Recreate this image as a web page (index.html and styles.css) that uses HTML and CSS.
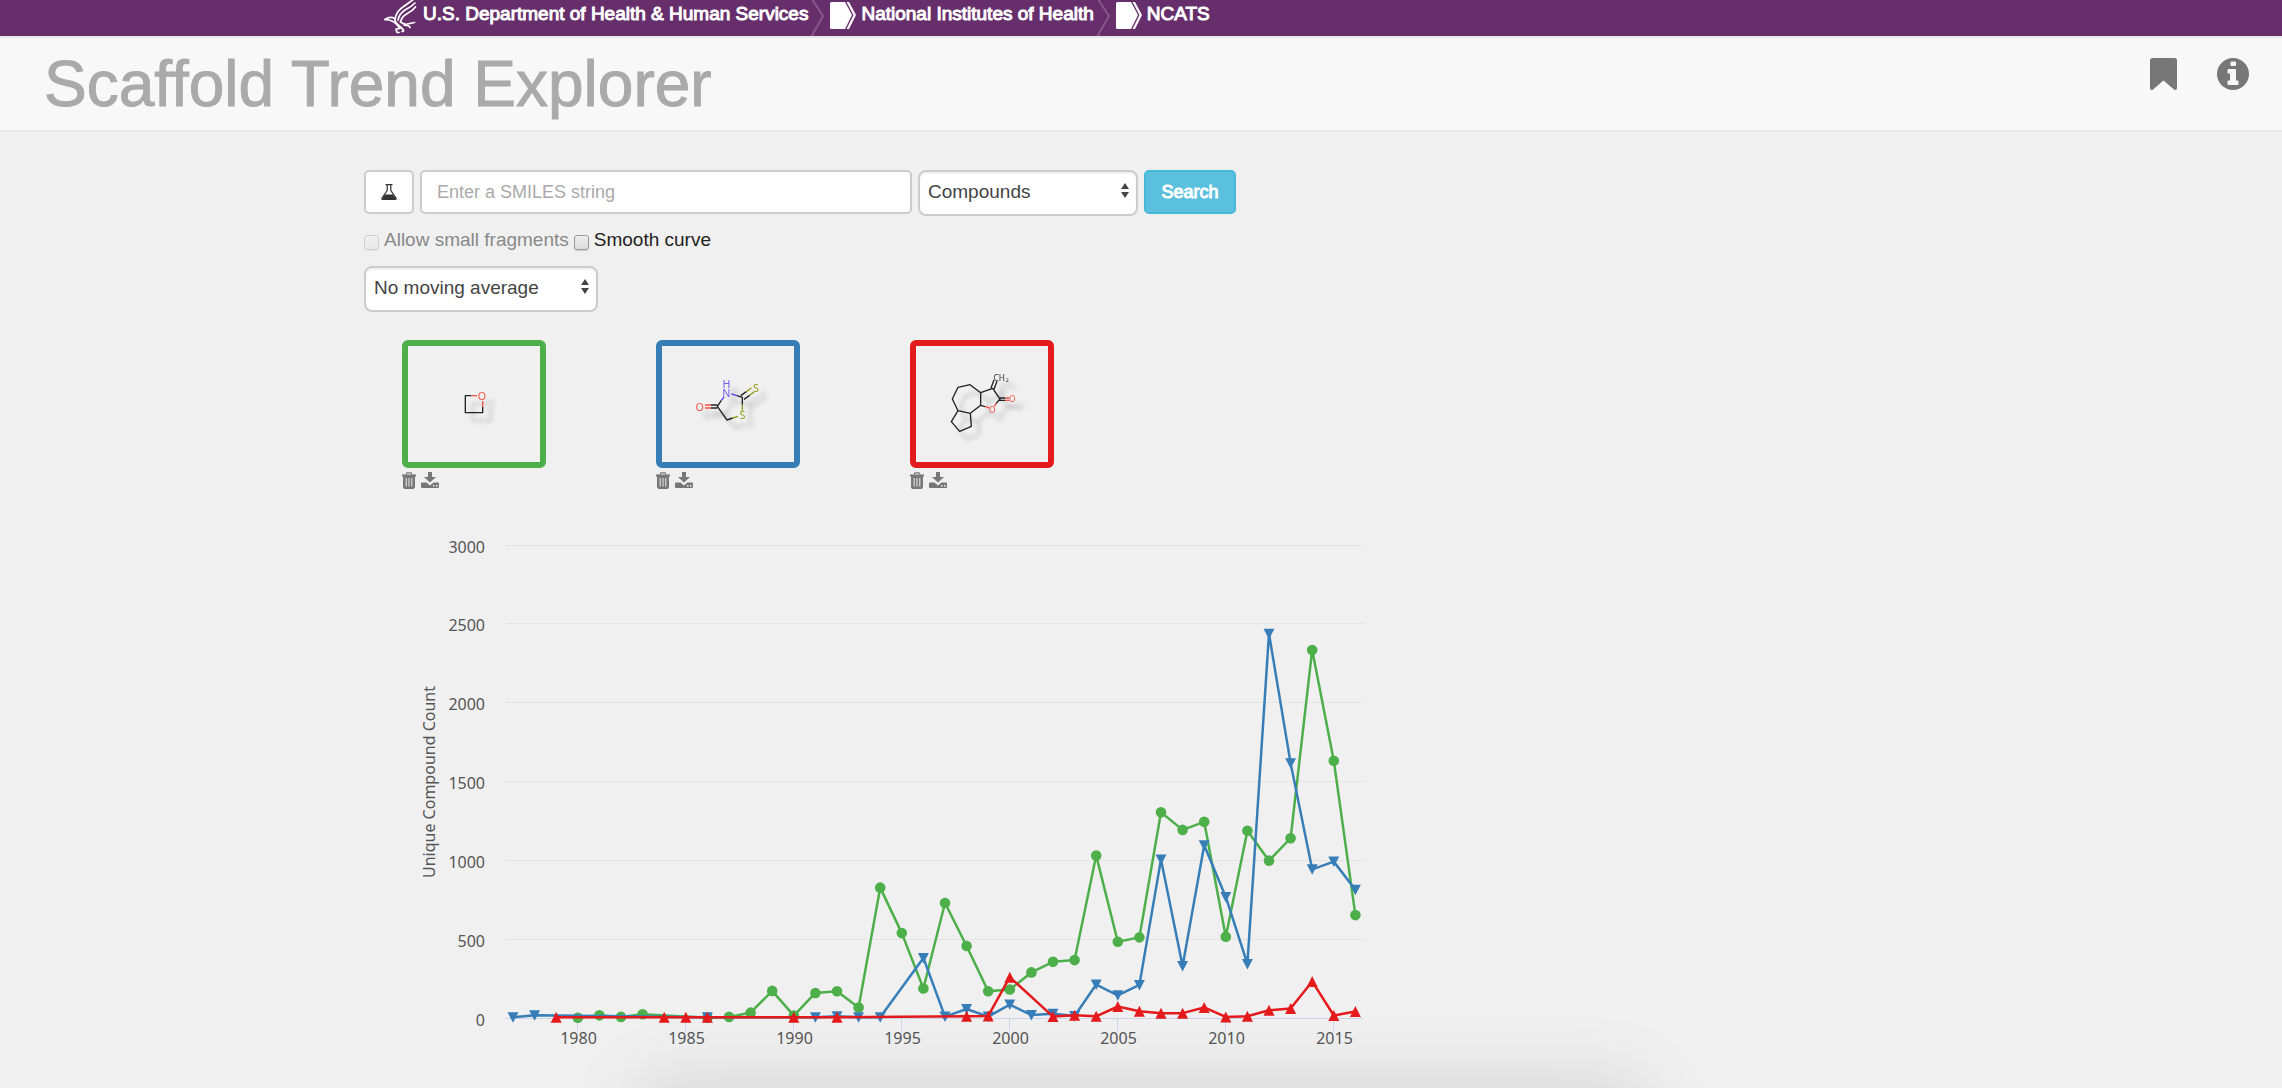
FILE: index.html
```html
<!DOCTYPE html>
<html lang="en">
<head>
<meta charset="utf-8">
<title>Scaffold Trend Explorer</title>
<link rel="stylesheet" href="styles.css">
</head>
<body>
<svg class="defs" aria-hidden="true">
  <symbol id="trash" viewBox="0 0 14 17">
    <path d="M4 2.500 5 .8h4l1 1.700" fill="none" stroke="currentColor" stroke-width="1.300"/>
    <path d="M0 2.500h14v2H0zM1 4.500h12V15q0 2-2 2H3q-2 0-2-2z" fill="currentColor"/>
    <path d="M4.200 6v8.500M7 6v8.500M9.800 6v8.500" stroke="#f0f0f0" stroke-width="1"/>
  </symbol>
  <symbol id="download" viewBox="0 0 18 17">
    <path d="M7 0h4v5h4L9 10.500 3 5h4z" fill="currentColor"/>
    <path d="M1 10.500h4.500L9 13.500l3.500-3H17q1 0 1 1V15q0 1-1 1H1q-1 0-1-1v-3.500q0-1 1-1z" fill="currentColor"/>
    <path d="M12 13h1.500v1.500H12zM15 13h1.500v1.500H15z" fill="#f0f0f0"/>
  </symbol>
  <symbol id="sorter" viewBox="0 0 8 17">
    <path d="M0 7 4 1l4 6zM0 10h8l-4 6z" fill="#444"/>
  </symbol>
  <symbol id="divider" viewBox="0 0 16 36">
    <path d="M2-1 13 16 1 37" fill="none" stroke="#85588a" stroke-width="2"/>
  </symbol>
  <symbol id="tag" viewBox="0 0 26 27">
    <path d="M1.500 0H15l7 13-7 14H1.500Q0 27 0 25.500v-24Q0 0 1.500 0z" fill="#fff"/>
    <path d="M16.500 0H19l7 13-7 14h-2.500l7-14z" fill="#fff"/>
  </symbol>
</svg>

<nav class="agency" aria-label="Agencies">
  <a class="agency-link" href="#hhs">
    <svg class="eagle" viewBox="0 0 34 34" aria-hidden="true">
      <g fill="none" stroke="#fff" stroke-width="1.700" stroke-linecap="round" stroke-linejoin="round">
        <path d="M1 19.500q5-3.500 10-1 2-8 8-11.500l11-8"/>
        <path d="M14 20q1-6 7-10 6-3 10-7"/>
        <path d="M16.500 22q1-5 6-8 6-3 9-7"/>
        <path d="M1 19.500q6 .5 9 2.500t6 6.500l-4 .5 1 3.500h2"/>
        <path d="M11 18.500q-1 3 5 8t2 5"/>
        <path d="M16.500 22q4 3 7 2l7-1.500M20 25l5 1 1 1.500"/>
      </g>
    </svg>
    <span>U.S. Department of Health &amp; Human Services</span>
  </a>
  <svg class="divider" aria-hidden="true"><use href="#divider"/></svg>
  <a class="agency-link" href="#nih"><svg class="tag" aria-hidden="true"><use href="#tag"/></svg><span>National Institutes of Health</span></a>
  <svg class="divider" aria-hidden="true"><use href="#divider"/></svg>
  <a class="agency-link" href="#ncats"><svg class="tag" aria-hidden="true"><use href="#tag"/></svg><span>NCATS</span></a>
</nav>

<header class="masthead">
  <h1 class="title">Scaffold Trend Explorer</h1>
  <div class="tools">
    <a class="tool" href="#bookmark" aria-label="Bookmark">
      <svg width="27" height="32" viewBox="0 0 27 32"><path d="M2.500 0h22Q27 0 27 2.500V30q0 2-1.800 2-1 0-1.800-1L13.500 22.500 3.600 31q-.8 1-1.800 1Q0 32 0 30V2.500Q0 0 2.500 0z" fill="#777"/></svg>
    </a>
    <a class="tool" href="#info" aria-label="Information">
      <svg width="32" height="32" viewBox="0 0 32 32"><circle cx="16" cy="16" r="16" fill="#777"/><path d="M14.500 3.500h3.500q1 0 1 1V7q0 1-1 1h-3.500q-1 0-1-1V4.500q0-1 1-1zM11.500 11H18q1 0 1 1v10.500h1.500q1 0 1 1V26q0 1-1 1h-9q-1 0-1-1v-2.500q0-1 1-1H13v-7h-1.500q-1 0-1-1V12q0-1 1-1z" fill="#f8f8f8"/></svg>
    </a>
  </div>
</header>

<main class="content">
  <form class="search">
    <div class="search-row">
      <button class="sketch" type="button" aria-label="Draw structure">
        <svg width="16" height="16" viewBox="0 0 16 16"><path d="M4.500.6h7" stroke="#333" stroke-width="1.300"/><path d="M6.200 1v5.500L1 14q-.6 1.300.6 1.300h12.800q1.200 0 .6-1.300L9.800 6.500V1" fill="none" stroke="#333" stroke-width="1.200"/><path d="M4 10.500h8l3 4.500H1z" fill="#333"/></svg>
      </button>
      <input class="smiles" type="text" placeholder="Enter a SMILES string" aria-label="SMILES string">
      <div class="picker picker-kind">
        <select class="select" aria-label="Search in"><option>Compounds</option></select>
        <svg class="sorter" aria-hidden="true"><use href="#sorter"/></svg>
      </div>
      <button class="submit" type="button">Search</button>
    </div>
    <div class="options">
      <input class="check" type="checkbox" id="small" disabled><label class="muted" for="small">Allow small fragments</label>
      <input class="check" type="checkbox" id="smooth"><label for="smooth">Smooth curve</label>
    </div>
    <div class="picker picker-average">
      <select class="select" aria-label="Moving average"><option>No moving average</option></select>
      <svg class="sorter" aria-hidden="true"><use href="#sorter"/></svg>
    </div>
  </form>

  <section class="scaffolds" aria-label="Scaffolds">
    <article class="scaffold">
      <div class="frame frame-green">
        <svg class="molecule" viewBox="0 0 396 348">
          <g class="bond"><path d="M190 149h-18v51h52v-17"/><path class="oxy" d="M190 149h17M224 183v-18"/></g>
          <text class="atom oxy-text" x="222" y="162">O</text>
        </svg>
      </div>
      <div class="actions">
        <button class="action" type="button" aria-label="Delete"><svg class="trash"><use href="#trash"/></svg></button>
        <button class="action" type="button" aria-label="Download"><svg class="download"><use href="#download"/></svg></button>
      </div>
    </article>
    <article class="scaffold">
      <div class="frame frame-blue">
        <svg class="molecule" viewBox="0 0 396 348">
          <g class="bond">
            <path d="M178 163 166 181 195 222 212 216M225 149l16 5v22M236 149l17-12M246 160l17-12M166 177h-19M166 186h-19"/>
            <path class="nit" d="m178 163 8-10M208 144l17 5"/>
            <path class="sul" d="m212 216 16-5M241 176v18M253 137l15-11M263 148l13-10"/>
            <path class="oxy" d="M147 177h-18M147 186h-18"/>
          </g>
          <text class="atom nit-text" x="193" y="127">H<tspan x="193" y="153">N</tspan></text>
          <text class="atom sul-text" x="282" y="139">S</text>
          <text class="atom sul-text" x="241" y="219">S</text>
          <text class="atom oxy-text" x="113" y="194">O</text>
        </svg>
      </div>
      <div class="actions">
        <button class="action" type="button" aria-label="Delete"><svg class="trash"><use href="#trash"/></svg></button>
        <button class="action" type="button" aria-label="Download"><svg class="download"><use href="#download"/></svg></button>
      </div>
    </article>
    <article class="scaffold">
      <div class="frame frame-red">
        <svg class="molecule" viewBox="0 0 396 348">
          <g class="bond">
            <path d="M194 140v38l-31 24-37-8-17-35 17-35 36-8 32 24 36-13 22 32-12 14M126 194l-20 33 25 29 35-15-3-39M194 178l14 4M225 126l9-24M234 130l9-24M252 156h16M252 163h16"/>
            <path class="oxy" d="m208 182 12 4M240 173l-5 8M268 156h12M268 163h12"/>
          </g>
          <text class="atom-small oxy-text" x="289" y="169">O</text>
          <text class="atom-small oxy-text" x="229" y="200">O</text>
          <text class="atom-small" x="250" y="104">CH</text>
          <text class="atom-sub" x="274" y="108">2</text>
        </svg>
      </div>
      <div class="actions">
        <button class="action" type="button" aria-label="Delete"><svg class="trash"><use href="#trash"/></svg></button>
        <button class="action" type="button" aria-label="Download"><svg class="download"><use href="#download"/></svg></button>
      </div>
    </article>
  </section>

  <svg class="chart" id="chart" width="980" height="540" viewBox="0 0 980 540" role="img" aria-label="Unique compound count by year">
    <defs>
      <marker id="dot" markerUnits="userSpaceOnUse" markerWidth="12" markerHeight="12" refX="6" refY="6"><circle cx="6" cy="6" r="5.300" fill="#4daf4a"/></marker>
      <marker id="down" markerUnits="userSpaceOnUse" markerWidth="12" markerHeight="12" refX="6" refY="6"><path d="M.5 1h11L6 11.500z" fill="#377eb8"/></marker>
      <marker id="up" markerUnits="userSpaceOnUse" markerWidth="12" markerHeight="12" refX="6" refY="6"><path d="M.5 11.500h11L6 .5z" fill="#e41a1c"/></marker>
    </defs>
  </svg>
</main>
<div class="drawer-shadow"></div>
<script src="chart.js"></script>
</body>
</html>
```

FILE: styles.css
```css
* { box-sizing: border-box; }

body {
  margin: 0;
  background: #f0f0f0;
  color: #222;
  font: 18px/26px "Liberation Sans", Arial, sans-serif;
}

button, input, select { font: inherit; margin: 0; }

.defs { display: none; }

/* Agency bar */
.agency {
  display: flex;
  height: 36px;
  padding-left: 384px;
  background: #662e6b;
  overflow: hidden;
}
.agency-link {
  display: flex;
  gap: 5px;
  color: #fff;
  font-size: 19px;
  line-height: 28px;
  text-decoration: none;
  white-space: nowrap;
  -webkit-text-stroke: 1px #fff;
}
.eagle { width: 34px; height: 34px; }
.tag { width: 26px; height: 27px; margin-top: 2px; }
.divider { width: 16px; height: 36px; margin: 0 4px 0 2px; }

/* Header */
.masthead {
  display: flex;
  justify-content: space-between;
  height: 96px;
  padding: 0 33px 0 44px;
  background: #f8f8f8;
  border: solid #e7e7e7;
  border-width: 2px 0;
}
.title {
  margin: 0;
  color: #aaa;
  font-size: 64px;
  font-weight: normal;
  line-height: 92px;
  -webkit-text-stroke: 1px #aaa;
}
.tools { display: flex; gap: 40px; padding-top: 20px; }
.tool { display: block; height: 32px; }
.tool svg { display: block; }

/* Search form */
.content { padding: 38px 0 0 364px; }
.search-row { display: flex; gap: 6px; max-width: 872px; }
.sketch, .smiles, .submit { height: 44px; border-radius: 5px; }
.sketch {
  display: grid;
  place-items: center;
  width: 50px;
  padding: 0;
  background: #fff;
  border: 2px solid #ccc;
}
.smiles {
  flex: 1;
  min-width: 0;
  padding: 0 15px;
  background: #fff;
  border: 2px solid #ccc;
}
.smiles::placeholder { color: #aaa; }
.submit {
  width: 92px;
  padding: 0;
  color: #fff;
  background: #5bc0de;
  border: 2px solid #46b8da;
  -webkit-text-stroke: 1px #fff;
}
.picker { display: grid; height: 46px; }
.picker > * { grid-area: 1 / 1; }
.picker-kind { width: 220px; }
.picker-average { width: 234px; }
.select {
  appearance: none;
  padding: 0 8px 3px;
  color: #444;
  background: #fff;
  border: 2px solid #ccc;
  border-radius: 8px;
  box-shadow: inset 0 2px 2px rgba(0, 0, 0, .06);
  font-size: 19px;
}
.sorter {
  width: 8px;
  height: 17px;
  margin: 12px 9px 0 0;
  justify-self: end;
  pointer-events: none;
}
.options {
  display: flex;
  align-items: center;
  gap: 5px;
  padding: 11px 0 13px;
  font-size: 19px;
}
.check {
  appearance: none;
  width: 15px;
  height: 15px;
  margin-top: 4px;
  border: 1px solid #999;
  border-radius: 3px;
  background: linear-gradient(#eee, #ddd);
  box-shadow: 0 1px 1px rgba(0, 0, 0, .15);
}
.check:disabled { opacity: .35; }
.muted { color: #888; }

/* Scaffold cards */
.scaffolds { display: flex; gap: 110px; padding: 28px 0 0 38px; }
.scaffold { width: 144px; }
.frame { height: 128px; border: 6px solid; border-radius: 6px; }
.frame-green { border-color: #4daf4a; }
.frame-blue { border-color: #377eb8; }
.frame-red { border-color: #e41a1c; }
.molecule {
  display: block;
  width: 100%;
  height: 100%;
  filter: drop-shadow(8px 8px 2px rgba(0, 0, 0, .25));
}
.bond path { fill: none; stroke: #222; stroke-width: 4; stroke-linejoin: round; }
.bond .oxy { stroke: #f0503c; }
.bond .nit { stroke: #5a46e6; }
.bond .sul { stroke: #8c9b14; }
.atom, .atom-small, .atom-sub {
  fill: #333;
  font-family: "Noto Sans", sans-serif;
  font-size: 32px;
  text-anchor: middle;
}
.atom-small { font-size: 25px; }
.atom-sub { font-size: 16px; }
.oxy-text { fill: #f0503c; }
.nit-text { fill: #6e5af0; }
.sul-text { fill: #8c9b14; }
.actions { display: flex; gap: 5px; padding-top: 4px; }
.action { padding: 0; border: 0; background: none; color: #777; }
.action svg { display: block; height: 17px; }
.trash { width: 14px; }
.download { width: 18px; }

/* Chart */
.chart {
  display: block;
  margin: 31px 0 0 36px;
  font-family: "Noto Sans", "Open Sans", sans-serif;
  font-size: 16px;
}
.chart text { fill: #555; }
.axis-title { text-anchor: middle; }
.y-label { text-anchor: end; }
.x-label { text-anchor: middle; }
.grid { stroke: #e4e4e4; }
.axis { stroke: #ccd6eb; }
.series { fill: none; stroke-width: 2.5; stroke-linejoin: round; }
.series-green { stroke: #4daf4a; marker: url(#dot); }
.series-blue { stroke: #377eb8; marker: url(#down); }
.series-red { stroke: #e41a1c; marker: url(#up); }

.drawer-shadow {
  position: fixed;
  top: 100%;
  left: 28%;
  right: 28%;
  height: 200px;
  box-shadow: 0 0 80px rgba(0, 0, 0, .13);
}
```

FILE: chart.js
```js
const chart = document.getElementById('chart');
const plot = { left: 105, right: 964, base: 498.5, top: 25, first: 113, step: 21.6 };

const x = year => plot.first + (year - 1977) * plot.step;
const y = count => plot.base - count * (plot.base - plot.top) / 3000;

function add(name, attributes, text) {
  const node = document.createElementNS('http://www.w3.org/2000/svg', name);
  for (const key in attributes) node.setAttribute(key, attributes[key]);
  if (text !== undefined) node.textContent = text;
  chart.append(node);
}

for (let count = 0; count <= 3000; count += 500) {
  const row = Math.floor(y(count)) + 0.5;
  add('line', { class: count ? 'grid' : 'axis', x1: plot.left, x2: plot.right, y1: row, y2: row });
  add('text', { class: 'y-label', x: 85, y: row + 7 }, count);
}
for (let year = 1980; year <= 2015; year += 5) {
  const column = Math.floor(x(year)) + 0.5;
  add('line', { class: 'axis', x1: column, x2: column, y1: plot.base, y2: plot.base + 12 });
  add('text', { class: 'x-label', x: column + 1, y: 524 }, year);
}
add('text', { class: 'axis-title', transform: 'translate(35 262) rotate(-90)' }, 'Unique Compound Count');

const series = {
  green: {
    1980: 5, 1981: 20, 1982: 10, 1983: 27, 1986: 5, 1987: 10, 1988: 37, 1989: 175, 1990: 18,
    1991: 162, 1992: 173, 1993: 70, 1994: 829, 1995: 541, 1996: 190, 1997: 732, 1998: 459,
    1999: 173, 2000: 184, 2001: 292, 2002: 359, 2003: 370, 2004: 1032, 2005: 486, 2006: 514,
    2007: 1307, 2008: 1195, 2009: 1246, 2010: 518, 2011: 1190, 2012: 1000, 2013: 1142,
    2014: 2335, 2015: 1633, 2016: 655
  },
  blue: {
    1977: 8, 1978: 20, 1986: 8, 1991: 8, 1992: 14, 1993: 8, 1994: 8, 1996: 384, 1997: 12,
    1998: 60, 1999: 12, 2000: 88, 2001: 22, 2002: 30, 2003: 16, 2004: 215, 2005: 147,
    2006: 213, 2007: 1008, 2008: 332, 2009: 1098, 2010: 770, 2011: 346, 2012: 2438,
    2013: 1618, 2014: 945, 2015: 994, 2016: 816
  },
  red: {
    1979: 8, 1984: 8, 1985: 8, 1986: 8, 1990: 8, 1992: 8, 1998: 14, 1999: 16, 2000: 262,
    2002: 12, 2003: 20, 2004: 14, 2005: 76, 2006: 46, 2007: 34, 2008: 34, 2009: 70,
    2010: 10, 2011: 14, 2012: 52, 2013: 63, 2014: 235, 2015: 19, 2016: 44
  }
};
for (const name in series) {
  const points = Object.entries(series[name]).map(([year, count]) => `${x(year)},${y(count)}`);
  add('polyline', { class: `series series-${name}`, points: points.join(' ') });
}
```
